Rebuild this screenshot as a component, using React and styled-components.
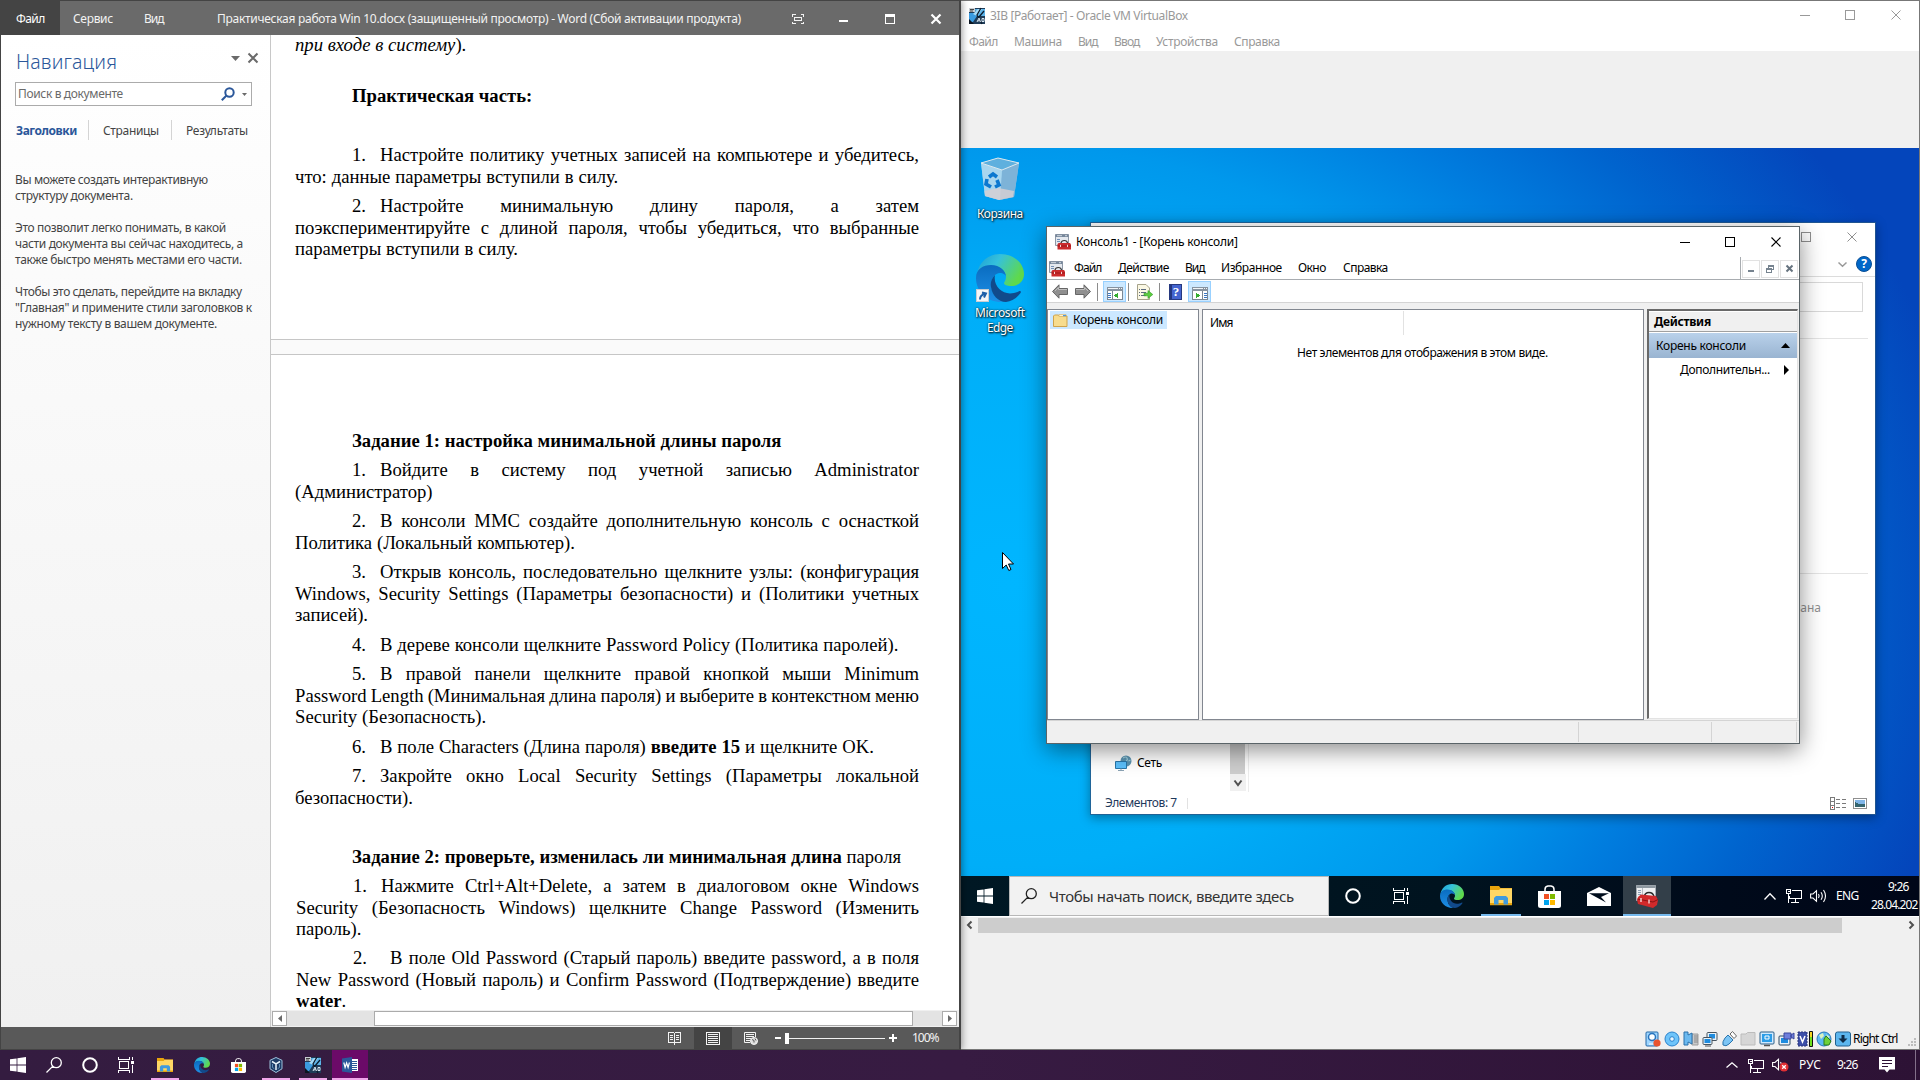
import React, { useLayoutEffect, useRef, useState } from 'react';
import styled, { createGlobalStyle, css } from 'styled-components';

const Global = createGlobalStyle`
  * { box-sizing: border-box; }
  html, body { margin: 0; padding: 0; }
  body {
    width: 1920px; height: 1080px; overflow: hidden; background: #32193f;
    font: 12px/16px "Noto Sans", "Open Sans", sans-serif; color: #000;
  }
  svg { display: block; flex: none; overflow: visible; }
`;

/* ---------- text whose tracking adapts to the width reserved for it ---------- */
const Label = styled.span`
  display: block;
  flex: none;
  white-space: pre;
  margin-left: ${(p) => p.$ml || 0}px;
  margin-top: ${(p) => p.$mt || 0}px;
  width: ${(p) => p.$w}px;
  font-size: ${(p) => p.$size || 12}px;
  line-height: ${(p) => p.$lh || 16}px;
  font-weight: ${(p) => p.$weight || 400};
  color: ${(p) => p.$color || 'inherit'};
`;
function T({ w, children, ml, mt, size, lh, weight, color }) {
  const ref = useRef(null);
  const [spacing, setSpacing] = useState(0);
  useLayoutEffect(() => {
    const range = document.createRange();
    range.selectNodeContents(ref.current);
    const natural = range.getBoundingClientRect().width;
    setSpacing((w - natural) / Math.max(1, String(children).length - 0.5));
  }, [w, children]);
  return (
    <Label ref={ref} $w={w} $ml={ml} $mt={mt} $size={size} $lh={lh} $weight={weight} $color={color}
      style={{ letterSpacing: spacing }}>{children}</Label>
  );
}

const Slot = styled.div`
  flex: none;
  margin-left: ${(p) => p.$ml || 0}px;
  margin-top: ${(p) => p.$mt || 0}px;
`;
const Spring = styled.div`flex: 1;`;

/* ---------- icons ---------- */
const Glyph = ({ w, h, color = 'currentColor', sw = 1, d, fill = 'none', crisp }) => (
  <svg width={w} height={h} viewBox={`0 0 ${w} ${h}`} fill={fill} stroke={sw ? color : 'none'} strokeWidth={sw}
    shapeRendering={crisp ? 'crispEdges' : 'auto'}><path d={d} /></svg>
);
const CloseX = ({ s = 11, color, sw = 1 }) => (
  <Glyph w={s} h={s} color={color} sw={sw} d={`M.5 .5L${s - 0.5} ${s - 0.5}M${s - 0.5} .5L.5 ${s - 0.5}`} />
);
const MaxBox = ({ color }) => <Glyph w={10} h={10} color={color} crisp d="M.5 .5h9v9h-9z" />;
const MinBar = ({ color }) => <Glyph w={10} h={1} color={color} crisp d="M0 .5h10" />;

const WinLogo = ({ s = 16 }) => (
  <svg width={s} height={s} viewBox="0 0 16 16" fill="#fff">
    <path d="M0 2.3L6.6 1.4V7.5H0zM7.4 1.3L16 0v7.5H7.4zM0 8.5h6.6v6.1L0 13.7zM7.4 8.5H16V16L7.4 14.7z" />
  </svg>
);
const Loupe = ({ color = '#fff' }) => (
  <Glyph w={16} h={16} color={color} sw={1.3} d="M15.3 5.7a5 5 0 1 1-10 0a5 5 0 1 1 10 0M6.6 9.4L.5 15.5" />
);
const Ring = () => (
  <svg width="16" height="16" viewBox="0 0 16 16"><circle cx="8" cy="8" r="6.8" fill="none" stroke="#fff" strokeWidth="2" /></svg>
);
const TaskView = () => (
  <svg width="16" height="16" viewBox="0 0 16 16" shapeRendering="crispEdges" fill="none" stroke="#fff">
    <path d="M1.5 4.5h9v7h-9zM.5 0v2.5h11V0M.5 16v-2.500h11V16M14.500 0v3M14.500 8v8" />
    <path d="M13 4h3v3h-3z" fill="#fff" stroke="none" />
  </svg>
);
const Edge = ({ s, id }) => (
  <svg width={s} height={s} viewBox="0 0 48 48">
    <defs>
      <linearGradient id={`${id}a`} x1="0" y1="0" x2="1" y2=".45">
        <stop offset="0" stopColor="#1b9ed4" /><stop offset=".45" stopColor="#35c1dc" /><stop offset="1" stopColor="#5fd94c" />
      </linearGradient>
      <linearGradient id={`${id}b`} x1="0" y1="0" x2="0" y2="1">
        <stop offset="0" stopColor="#0a6cc0" /><stop offset="1" stopColor="#1e8fe6" />
      </linearGradient>
    </defs>
    <path d="M1 20C3 8 12 0 24 0c14 0 24 9.500 24 20c0 8-6 12-13 12c-4 0-7-1-7-3c0-1 2-2.500 2-6c0-6-6-11-14-11C8 12 3 16 1 20z" fill={`url(#${id}a)`} />
    <path d="M0 24c0-9 7-13 15-13c9 0 15 6 15 12c0-2-3-4-6-4c-5 0-9 5-9 12c0 9 6 15 12 17C12 49 0 38 0 24z" fill={`url(#${id}b)`} />
    <path d="M19 21c-3 3-5 7-4 12c1 8 7 15 15 15c6-1 11-4 14.500-9c1-1.500 0-2.500-1.500-1.700C40 39 37 39.500 34 39.500C25 39.500 17 31 19 21z" fill="#114a8b" />
  </svg>
);
const Explorer = ({ s }) => (
  <svg width={s} height={s * 0.87} viewBox="0 0 22 19" preserveAspectRatio="none">
    <path d="M0 0h9l1.500 2H22v17H0z" fill="#e8a40c" /><path d="M0 4h9l1.500-1.500H22V17H0z" fill="#ffd765" />
    <path d="M4 18.500V12l2-2h10l2 2v6.500h-4.500V14h-5v4.500z" fill="#3f9ade" />
  </svg>
);
const Store = ({ s }) => (
  <svg width={s} height={s} viewBox="0 0 23 23">
    <path d="M7 8V4.500a3.500 3.500 0 0 1 3-3.500h3a3.500 3.500 0 0 1 3 3.500V8" fill="none" stroke="#fff" strokeWidth="1.500" />
    <path d="M0 6h23v14.500a2.500 2.500 0 0 1-2.500 2.500h-18A2.500 2.500 0 0 1 0 20.500z" fill="#fff" />
    <path d="M6 9h5v5H6z" fill="#f25022" /><path d="M12 9h5v5h-5z" fill="#7fba00" />
    <path d="M6 15h5v5H6z" fill="#00a4ef" /><path d="M12 15h5v5h-5z" fill="#ffb900" />
  </svg>
);
const Mail = () => (
  <svg width="24" height="19" viewBox="0 0 24 19">
    <path d="M0 6L12 0L24 6V19H0z" fill="#fff" /><path d="M2 6.300h20l-8 3.700l5 5.500L2 6.300z" fill="#000d1c" />
  </svg>
);
const VBox = () => (
  <svg width="14" height="16" viewBox="0 0 14 16">
    <path d="M7 .5l6 2.800v8.500L7 15.500l-6-3.700V3.300z" fill="#1c3b66" stroke="#9fc2dd" />
    <path d="M3 4.500L7 6.800l4-2.300M7 6.800V13" stroke="#e8f4fb" strokeWidth="1.500" fill="none" />
    <path d="M3.500 7v3.500l1.800 1.200M10.500 7v3.500l-1.800 1.200" stroke="#5f8fb8" fill="none" />
  </svg>
);
const VmIcon = () => (
  <svg width="16" height="16" viewBox="0 0 16 16">
    <path d="M0 0h16v16H0z" fill="#1f3c58" /><path d="M6 1h10v7H7z" fill="#5db4ea" /><path d="M0 5h7l1 3-4 6H0z" fill="#3b9be0" />
    <path d="M9 1h4L8 8 4 6z" fill="#a5dbf8" /><path d="M0 0h6v4H0z" fill="#c9cdd2" /><path d="M1 1.500h4M1 3h3" stroke="#444" />
    <path d="M12 0L8 7l5 9M15 3l-5 6" stroke="#0c1c2d" strokeWidth="1.300" fill="none" />
    <path d="M8 14l2-4 1.500 4M8.800 12.800h2M13 10.500h2v3h-2z" stroke="#dbe8f2" fill="none" /><path d="M0 11l5 5H0z" fill="#0b1420" />
  </svg>
);
const WordIcon = () => (
  <svg width="16" height="16" viewBox="0 0 16 16">
    <path d="M8 2h8v12H8z" fill="#fff" /><path d="M10 4.500h5M10 6.500h5M10 8.500h5M10 10.500h5M10 12.500h5" stroke="#2b579a" />
    <path d="M0 1.500L10 0v16L0 14.500z" fill="#2b579a" /><path d="M1.800 5.500l1.300 5 1.500-4.500 1.500 4.500 1.300-5" stroke="#fff" strokeWidth="1.200" fill="none" />
  </svg>
);
const Chevron = ({ w = 12, h = 7, color = '#fff', sw = 1.3, down }) => (
  <Glyph w={w} h={h} color={color} sw={sw} d={down ? `M.5 .5L${w / 2} ${h - 0.8}L${w - 0.5} .5` : `M.5 ${h - 0.5}L${w / 2} .8L${w - 0.5} ${h - 0.5}`} />
);
const Net = () => (
  <svg width="16" height="14" viewBox="0 0 16 14" fill="none" stroke="#fff" shapeRendering="crispEdges">
    <path d="M5.500 1.500h10v8h-12v-3M9.500 9.500v3.500M5 13.500h8M.5 .5h4v4h-4zM2.500 4.500v9M1.500 2.500h2" />
  </svg>
);
const Speaker = () => (
  <Glyph w={17} h={14} color="#fff" sw={1.1} d="M.6 5h2.400L6.500 1.700v10.600L3 9H.6zM8.500 5q1.300 2 0 4M11 3.200q2.600 3.800 0 7.600M13.500 1q4 6 0 12" />
);
const Muted = () => (
  <svg width="17" height="14" viewBox="0 0 17 14">
    <path d="M.6 4.500h2.400L6.500 1.200v10.600L3 8.500H.6zM8.500 4q.8 1 .6 2" fill="none" stroke="#fff" strokeWidth="1.100" />
    <circle cx="12" cy="9" r="4.500" fill="#e02f33" /><path d="M10.200 7.200l3.600 3.600M13.800 7.200l-3.600 3.600" stroke="#fff" strokeWidth="1.300" />
  </svg>
);
const Notice = () => (
  <svg width="16" height="16" viewBox="0 0 16 16">
    <path d="M0 0h16v12.500H10.500L8 15.500 5.500 12.500H0z" fill="#fff" /><path d="M3 3.500h10M3 6.500h10M3 9.500h6" stroke="#2d1235" />
  </svg>
);
const Toolbox = ({ s = 16 }) => (
  <svg width={s} height={s} viewBox="0 0 16 16">
    <path d="M.5 .5h13v11H.5z" fill="#e4e8ee" stroke="#8d97a5" /><path d="M.5 .5h13v2.500H.5z" fill="#76879b" />
    <path d="M2 5.500h3M2 7.500h3" stroke="#7390b5" /><path d="M2 1.700h5M10 1.700h2" stroke="#e8edf2" strokeWidth=".8" />
    <path d="M6 9Q6.500 6.500 9.300 6.500T12.500 9" fill="none" stroke="#333" strokeWidth="1.200" />
    <path d="M3.500 9H15l1 1.500v5H2.500v-5z" fill="#cb2a2c" /><path d="M2.500 12H16" stroke="#8f1517" strokeWidth=".8" />
    <path d="M5.500 10.800v2.200M12.500 10.800v2.200" stroke="#f5d5d5" />
  </svg>
);
const ToolboxLarge = () => (
  <svg width="22" height="23" viewBox="0 0 22 23">
    <path d="M.5 .5h19v15H.5z" fill="#eef0f2" stroke="#a9afb5" /><path d="M.5 .5h19v2.500H.5z" fill="#8d979f" />
    <path d="M2 5.500h3M2 7.500h3M2 9.500h3" stroke="#8fa0b5" /><path d="M6.500 3v8" stroke="#b6bcc2" />
    <path d="M8 12q1-4.500 5-4.500t5 4" fill="none" stroke="#2a2a2a" strokeWidth="1.300" />
    <path d="M2 12l3-2.500L20 11l2 4-1 5-4 3-15-4-1-4z" fill="#d22a2b" /><path d="M1.500 14L17 17l5-2.500" fill="none" stroke="#8c1214" />
    <path d="M5 13v4M13 14.500v4" stroke="#f4cccc" strokeWidth="1.500" />
  </svg>
);
const ArrowIcon = ({ back }) => (
  <svg width="16" height="15" viewBox="0 0 16 15">
    <path d={back ? 'M.5 7.500L7 .8v3.700h8.500v6H7v3.700z' : 'M15.500 7.500L9 .8v3.700H.5v6H9v3.700z'} fill="#8f8f8f" stroke="#666" />
    <path d={back ? 'M3 7L6.500 3.500v2H15' : 'M13 7L9.500 3.500v2H1'} stroke="#bdbdbd" fill="none" />
  </svg>
);
const PaneIcon = ({ flip }) => (
  <svg width="16" height="13" viewBox="0 0 16 13" shapeRendering="crispEdges">
    <path d="M.5 .5h15v12H.5z" fill="#fff" stroke="#7b8794" /><path d="M0 0h16v4H0z" fill="#8793a0" />
    <path d="M1 1.500h10M12 1.500h1M14 1.500h1" stroke="#f2f5f8" />
    {flip ? (
      <><path d="M10.500 4v9" stroke="#7b8794" /><path d="M12 6.500h3M12 8.500h3M12 10.500h3" stroke="#3877c5" /><path d="M4 5.500L8 8.500 4 11.500z" fill="#35ad31" /></>
    ) : (
      <><path d="M5.500 4v9" stroke="#7b8794" /><path d="M1 6.500h3M1 8.500h3M1 10.500h3" stroke="#3877c5" /><path d="M11 5.500L7 8.500l4 3z" fill="#35ad31" /></>
    )}
  </svg>
);
const ExportIcon = () => (
  <svg width="16" height="16" viewBox="0 0 16 16">
    <path d="M.5 .5H9l3.500 3.500v11.500H.5z" fill="#fbf8e4" stroke="#a6a28a" />
    <path d="M2 5.500h1M4 5.500h5M2 8.500h1M4 8.500h5M2 11.500h1M4 11.500h5" stroke="#5c6b80" />
    <path d="M7 9.200h4V6.500l4.800 4-4.800 4v-2.700H7z" fill="#5ccc3e" stroke="#2e9a22" strokeWidth=".6" />
  </svg>
);
const HelpBook = styled.div`
  flex: none; width: 13px; height: 16px; margin-left: ${(p) => p.$ml}px;
  background: linear-gradient(90deg, #24377f 0 2px, #4464cf 2px); border: 1px solid #27397f;
  color: #fff; font: bold 13px/14px "Liberation Serif", serif; text-align: center; padding-left: 1px;
`;
const FolderIcon = () => (
  <svg width="15" height="13" viewBox="0 0 15 13">
    <path d="M.5 2l1-1h4l1 1h7.500v10.500H.5z" fill="#f7dc8d" stroke="#cfa34b" /><path d="M6 .5h7v2H6z" fill="#fff4cf" stroke="#d3ad5c" strokeWidth=".6" />
    <path d="M10 1h3v1.200h-3z" fill="#4f9be0" />
  </svg>
);
const NetworkIcon = () => (
  <svg width="17" height="17" viewBox="0 0 17 17">
    <circle cx="11" cy="6" r="5.500" fill="#5b93b0" /><path d="M8 3q3-2 4 0t-1 3M13.500 6l2-1" stroke="#9fcfdd" strokeWidth="1.200" fill="none" />
    <path d="M.5 6.500h11v7H.5z" fill="#5cc0fc" stroke="#2976a8" /><path d="M3 15.500h6M6 13.500v2" stroke="#8ba3b4" />
  </svg>
);
const Bin = () => (
  <svg width="40" height="44" viewBox="0 0 40 44">
    <path d="M1 6L18 1l21 5-5 34-15 3-14-4z" fill="#8fc7e8" opacity=".95" />
    <path d="M22 13l17-7-5 34-15 3z" fill="#7db3d8" /><path d="M1 6l21 7-2 30-15-4z" fill="#a8d6ef" />
    <path d="M4.500 34l14-3 15.500 3-.8 6L19 43 5 39z" fill="#d3cfd4" opacity=".85" />
    <path d="M1 6L18 1l21 5-17 7z" fill="#5fb0de" stroke="#dbe8ee" />
    <path d="M9 20l4-3 4 3M17 23l2 5-4 2M11 30l-5-3 1-5" fill="none" stroke="#0b78d0" strokeWidth="3.600" />
  </svg>
);
const Shortcut = styled.div`
  position: absolute; left: 0; bottom: 0; width: 13px; height: 13px; background: #f4f6f8; border: 1px solid #c8cdd2;
`;
const HelpDot = styled.div`
  width: 16px; height: 16px; border-radius: 50%; background: #0067c8; border: 1px solid #0a4f96; color: #fff;
  font: bold 12px/14px "Noto Sans", sans-serif; text-align: center; flex: none;
  margin-left: ${(p) => p.$ml}px;
`;

/* ---------- Word ---------- */
const WordWindow = styled.section`
  position: absolute; left: 0; top: 0; width: 961px; height: 1050px; z-index: 2;
  display: flex; flex-direction: column; background: #f0f0f0;
  border: solid #444; border-width: 1px 2px 1px 1px; box-shadow: 1px 0 7px rgba(0, 0, 0, .4);
`;
const WordTitle = styled.header`
  height: 34px; flex: none; display: flex; align-items: center; background: #6a6a6a; color: #f3f3f3;
`;
const FileTab = styled.div`
  width: 59px; height: 34px; background: #444; padding: 10px 0 0 15px; color: #fff;
`;
const WordBody = styled.div`flex: 1; min-height: 0; display: flex;`;
const NavPane = styled.aside`
  width: 270px; flex: none; padding: 11px 0 0 14px; color: #444;
  background: linear-gradient(#fff, #fafafa 30%, #f0f0f0); border-right: 1px solid #c8c8c8;
`;
const NavHead = styled.div`display: flex; align-items: flex-start; height: 36px;`;
const SearchBox = styled.div`
  width: 237px; height: 24px; border: 1px solid #ababab; background: #fff; display: flex; align-items: center; padding-left: 2px; color: #6a6a6a;
`;
const NavTabs = styled.div`display: flex; height: 20px; margin-top: 14px; padding-left: 1px; align-items: center;`;
const TabRule = styled.i`width: 1px; height: 20px; background: #d4d4d4; margin-left: ${(p) => p.$ml}px;`;
const Hint = styled.div`display: flex; flex-direction: column; gap: 16px; margin-top: 32px;`;
const DocColumn = styled.div`flex: 1; min-width: 0; display: flex; flex-direction: column; background: #f0f0f0;`;
const DocView = styled.div`
  height: 975px; overflow: hidden; background: #fff; color: #000;
  font: 18.67px/21.5px "Liberation Serif", "Times New Roman", serif;
`;
const Page = styled.div`
  display: flow-root; padding: ${(p) => p.$top}px 40px 0 24px; height: ${(p) => p.$h}px;
`;
const PageGap = styled.div`height: 16px; background: #fafafa; border: solid #c6c6c6; border-width: 1px 0;`;
const Para = styled.div`margin-top: ${(p) => p.$mt ?? 8}px; margin-left: ${(p) => p.$ml || 0}px;`;
const Line = styled.div`
  height: 21.5px; white-space: nowrap;
  ${(p) => p.$first && css`padding-left: 57px; display: flex;`}
`;
const Num = styled.span`flex: none; width: ${(p) => p.$w || 28}px;`;
const Run = styled.span`
  display: block; flex: 1;
  ${(p) => p.$just ? css`text-align-last: justify; word-spacing: -.7px;` : css`word-spacing: .25px;`}
`;
const Heading = styled.div`margin: ${(p) => p.$mt}px 0 0 57px; height: 21.5px; white-space: nowrap; font-weight: bold; word-spacing: .1px;`;
const Light = styled.span`font-weight: normal;`;

const DocScroll = styled.div`height: 17px; display: flex; align-items: center; padding: 0 2px 0 1px; background: #f0f0f0;`;
const ScrollBtn = styled.div`
  width: 15px; height: 15px; background: #fff; border: 1px solid #ababab; display: flex; align-items: center; justify-content: center;
`;
const Track = styled.div`flex: 1; height: 15px; background: #e3e3e3; padding-left: 87px;`;
const Thumb = styled.div`width: 539px; height: 15px; background: #fff; border: 1px solid #ababab;`;
const WordStatus = styled.footer`
  height: 22px; flex: none; background: #595959; display: flex; align-items: center; color: #f3f3f3;
`;
const ModeBtn = styled.div`
  width: 38px; height: 22px; display: flex; align-items: center; justify-content: center; background: ${(p) => (p.$on ? '#444' : 'none')};
`;
const Zoom = styled.div`display: flex; align-items: center; margin-left: 5px;`;
const ZoomBar = styled.div`width: 100px; height: 11px; display: flex; align-items: center; margin: 0 4px;`;
const Knob = styled.i`width: 4px; height: 11px; background: #fff;`;
const Rail = styled.i`flex: 1; height: 1px; background: #f0f0f0;`;

function ListItem({ n, lines, mt, ml, nw }) {
  return (
    <Para $mt={mt} $ml={ml}>
      {lines.map((l, i) => {
        const just = i < lines.length - 1;
        return (
          <Line key={i} $first={i === 0}>
            {i === 0 && <Num $w={nw}>{n}.</Num>}
            <Run $just={just}>{l}</Run>
          </Line>
        );
      })}
    </Para>
  );
}

const hints = [
  [['Вы можете создать интерактивную', 193], ['структуру документа.', 118]],
  [['Это позволит легко понимать, в какой', 211], ['части документа вы сейчас находитесь, а', 228], ['также быстро менять местами его части.', 227]],
  [['Чтобы это сделать, перейдите на вкладку', 227], ['"Главная" и примените стили заголовков к', 237], ['нужному тексту в вашем документе.', 202]],
];

function Word() {
  return (
    <WordWindow>
      <WordTitle>
        <FileTab><T w={29} lh={16}>Файл</T></FileTab>
        <T w={40} ml={13} mt={2}>Сервис</T>
        <T w={20} ml={31} mt={2}>Вид</T>
        <T w={524} ml={53} mt={2}>Практическая работа Win 10.docx (защищенный просмотр) - Word (Сбой активации продукта)</T>
        <Slot $ml={51} $mt={2}>
          <svg width="12" height="10" viewBox="0 0 12 10" fill="none" stroke="#f3f3f3" shapeRendering="crispEdges">
            <path d="M.5 2.500v-2h3M8.500 .5h3v2M11.500 7.500v2h-3M3.500 9.500h-3v-2M2.500 3.500h7v3h-7z" />
          </svg>
        </Slot>
        <Slot $ml={35} $mt={6}><Glyph w={9} h={2} color="#fff" sw={2} d="M0 1h9" crisp /></Slot>
        <Slot $ml={37} $mt={2}><svg width="10" height="10" shapeRendering="crispEdges"><path d="M.5 .5h9v9h-9z" fill="none" stroke="#fff" /><path d="M0 0h10v3H0z" fill="#fff" /></svg></Slot>
        <Slot $ml={36} $mt={2}><CloseX s={10} color="#fff" sw={2.2} /></Slot>
      </WordTitle>
      <WordBody>
        <NavPane>
          <NavHead>
            <T w={101} ml={1} size={19.500} lh={32} weight={300} color="#2b579a">Навигация</T>
            <Slot $ml={114} $mt={10}><svg width="9" height="5"><path d="M0 0h9L4.500 5z" fill="#6a6a6a" /></svg></Slot>
            <Slot $ml={8} $mt={7}><CloseX s={10} color="#6a6a6a" sw={2} /></Slot>
          </NavHead>
          <SearchBox>
            <T w={105} lh={20}>Поиск в документе</T>
            <Slot $ml={98}><svg width="14" height="14" viewBox="0 0 14 14" fill="none" stroke="#2b579a" strokeWidth="2"><circle cx="8.500" cy="5.500" r="4.200" /><path d="M5.500 8.500L.8 13.200" /></svg></Slot>
            <Slot $ml={7}><svg width="5" height="3"><path d="M0 0h5L2.500 3z" fill="#6a6a6a" /></svg></Slot>
          </SearchBox>
          <NavTabs>
            <T w={61} weight={700} color="#2b579a" mt={2}>Заголовки</T><TabRule $ml={11} />
            <T w={56} ml={14} mt={2}>Страницы</T><TabRule $ml={12} />
            <T w={62} ml={14} mt={2}>Результаты</T>
          </NavTabs>
          <Hint>
            {hints.map((b, i) => <div key={i}>{b.map(([t, w]) => <T key={t} w={w}>{t}</T>)}</div>)}
          </Hint>
        </NavPane>
        <DocColumn>
          <DocView>
            <Page $top={0} $h={304}>
              <Para $mt={-1}><Line><em>при входе в систему</em>).</Line></Para>
              <Heading $mt={29}>Практическая часть:</Heading>
              <ListItem mt={38} n={1} lines={['Настройте политику учетных записей на компьютере и убедитесь,', 'что: данные параметры вступили в силу.']} />
              <ListItem n={2} lines={['Настройте минимальную длину пароля, а затем', 'поэкспериментируйте с длиной пароля, чтобы убедиться, что выбранные', 'параметры вступили в силу.']} />
            </Page>
            <PageGap />
            <Page $top={75} $h={700}>
              <Heading $mt={0}>Задание 1: настройка минимальной длины пароля</Heading>
              <ListItem mt={7.5} n={1} lines={['Войдите в систему под учетной записью Administrator', '(Администратор)']} />
              <ListItem n={2} lines={['В консоли MMC создайте дополнительную консоль с оснасткой', 'Политика (Локальный компьютер).']} />
              <ListItem n={3} lines={['Открыв консоль, последовательно щелкните узлы: (конфигурация', 'Windows, Security Settings (Параметры безопасности) и (Политики учетных', 'записей).']} />
              <ListItem n={4} lines={['В дереве консоли щелкните Password Policy (Политика паролей).']} />
              <ListItem n={5} lines={['В правой панели щелкните правой кнопкой мыши Minimum', 'Password Length (Минимальная длина пароля) и выберите в контекстном меню', 'Security (Безопасность).']} />
              <ListItem n={6} lines={[<>В поле Characters (Длина пароля) <b>введите 15</b> и щелкните OK.</>]} />
              <ListItem n={7} lines={['Закройте окно Local Security Settings (Параметры локальной', 'безопасности).']} />
              <Heading $mt={38}>Задание 2: проверьте, изменилась ли минимальная длина <Light>пароля</Light></Heading>
              <ListItem ml={1} mt={7.5} n={1} lines={['Нажмите Ctrl+Alt+Delete, а затем в диалоговом окне Windows', 'Security (Безопасность Windows) щелкните Change Password (Изменить', 'пароль).']} />
              <ListItem ml={1} mt={7.5} nw={37} n={2} lines={['В поле Old Password (Старый пароль) введите password, а в поля', 'New Password (Новый пароль) и Confirm Password (Подтверждение) введите', <><b>water</b>.</>]} />
            </Page>
          </DocView>
          <DocScroll>
            <ScrollBtn><svg width="4" height="7"><path d="M4 0v7L0 3.500z" fill="#6a6a6a" /></svg></ScrollBtn>
            <Track><Thumb /></Track>
            <ScrollBtn><svg width="4" height="7"><path d="M0 0v7L4 3.500z" fill="#6a6a6a" /></svg></ScrollBtn>
          </DocScroll>
        </DocColumn>
      </WordBody>
      <WordStatus>
        <Slot $ml={655} />
        <ModeBtn>
          <svg width="14" height="13" viewBox="0 0 14 13" fill="none" stroke="#f3f3f3" shapeRendering="crispEdges">
            <path d="M.5 .5h5l1 1 1-1h5v10h-5l-1 1-1-1h-5zM6.500 1v12M2 3.500h3M2 5.500h3M2 7.500h3M8 3.500h3M8 5.500h3M8 7.500h3" />
          </svg>
        </ModeBtn>
        <ModeBtn $on>
          <svg width="14" height="13" viewBox="0 0 14 13" fill="none" stroke="#f3f3f3" shapeRendering="crispEdges">
            <path d="M.5 .5h13v12H.5zM2 2.500h10M2 4.500h10M2 6.500h10M2 8.500h10M2 10.500h10" />
          </svg>
        </ModeBtn>
        <ModeBtn>
          <svg width="14" height="13" viewBox="0 0 14 13" fill="none" stroke="#f3f3f3">
            <path d="M6 10.500H.5V.5h11V5M2 2.500h8M2 4.500h8M2 6.500h5M2 8.500h4" /><circle cx="10" cy="9" r="3.500" fill="#ddd" />
            <path d="M8 7.500l2 1v2M11 6.500l1 2" stroke="#595959" />
          </svg>
        </ModeBtn>
        <Zoom>
          <Slot><Glyph w={6} h={2} sw={2} color="#fff" d="M0 1h6" crisp /></Slot>
          <ZoomBar><Knob /><Rail /></ZoomBar>
          <Slot><Glyph w={8} h={8} sw={2} color="#fff" d="M0 4h8M4 0v8" crisp /></Slot>
        </Zoom>
        <T w={27} ml={15}>100%</T>
      </WordStatus>
    </WordWindow>
  );
}

/* ---------- Virtual machine window ---------- */
const VmWindow = styled.section`
  position: absolute; left: 961px; top: 0; width: 959px; height: 1050px; background: #f0f0f0;
  border: solid #777; border-width: 1px 1px 1px 0; display: flex; flex-direction: column;
`;
const VmTitle = styled.div`height: 25px; background: #fff; display: flex; align-items: center; color: #999; padding: 4px 0 0 8px;`;
const VmMenu = styled.div`height: 25px; background: #fff; display: flex; align-items: center; color: #999; padding: 6px 0 0 8px;`;
const Guest = styled.div`
  position: relative; margin-top: 97px; width: 958px; height: 768px; overflow: hidden; flex: none;
  background: radial-gradient(ellipse 1000px 800px at 5% 57%, #00b6ff 0, #00aef8 35%, #0098ec 55%, #007cde 68%, #0064ce 80%, #0445bb 97%);
`;
const DesktopIcon = styled.div`
  position: absolute; left: 0; top: ${(p) => p.$top}px; width: 78px; display: flex; flex-direction: column; align-items: center;
  color: #fff; text-shadow: 1px 1px 2px #000, 0 0 2px rgba(0,0,0,.8); line-height: 15px;
`;
const EdgeHolder = styled.div`position: relative; width: 48px; height: 48px; margin-bottom: 3px;`;
const Cursor = styled.div`position: absolute; left: 41px; top: 404px; z-index: 5;`;
const VmScroll = styled.div`height: 16px; padding: 1px 5px 0 6px; display: flex; align-items: center; margin-top: 0; border-top: 1px solid #fff;`;
const VmThumb = styled.div`width: 864px; height: 15px; background: #cdcdcd; margin: 0 0 0 6px; flex: none;`;
const VmStatus = styled.div`display: flex; align-items: center; height: 17px; margin: auto 0 2px 684px;`;
const StatusIcons = styled.div`display: flex; gap: 3px; width: 208px;`;

const ExplorerWindow = styled.div`
  position: absolute; left: 129px; top: 74px; width: 786px; height: 593px; background: #fff; border: 1px solid rgba(40, 90, 140, .8);
  background-clip: padding-box; box-shadow: 0 3px 10px rgba(0, 0, 0, .35); display: flex; flex-direction: column; color: #8f8f8f;
`;
const ExTitle = styled.div`height: 54px; border-bottom: 1px solid #dcdcdc; display: flex; flex-direction: column; flex: none;`;
const ExRow = styled.div`
  display: flex; justify-content: flex-end; align-items: center; flex: none;
  height: ${(p) => p.$h}px; padding: ${(p) => p.$pt || 0}px ${(p) => p.$pr}px 0 0;
`;
const ExAddress = styled.div`height: 30px; margin: 5px 12px 0 300px; border: 1px solid #d9d9d9;`;
const ExRule = styled.div`height: 1px; background: #e4e4e4; margin: ${(p) => p.$mt}px 7px 0 300px;`;
const ExLower = styled.div`display: flex; height: 50px; color: #000; margin-top: auto;`;
const ExTree = styled.div`width: 139px; display: flex; padding: 13px 0 0 24px;`;
const ExScroll = styled.div`width: 19px; border-right: 1px solid #ececec;`;
const ExThumb = styled.div`width: 15px; height: 32px; background: #cdcdcd;`;
const ExDown = styled.div`width: 16px; height: 17px; background: #f0f0f0; display: flex; align-items: center; justify-content: center;`;
const ExStatus = styled.div`height: 22px; display: flex; align-items: center; color: #1e395b; padding: 0 8px 0 14px;`;
const ThinRule = styled.i`width: 1px; height: 11px; background: #e2e2e2; margin-left: ${(p) => p.$ml}px;`;
const Faint = styled.div`margin: 26px 54px 0 auto; font-size: 12px;`;

const Console = styled.div`
  position: absolute; left: 85px; top: 78px; width: 754px; height: 518px; background: #fff; border: 1px solid #5a6468;
  box-shadow: 0 6px 22px rgba(0, 0, 0, .45); display: flex; flex-direction: column;
`;
const CTitle = styled.div`height: 30px; display: flex; align-items: center; padding-left: 8px; flex: none;`;
const CMenu = styled.div`height: 23px; display: flex; align-items: center; padding-left: 2px; border-bottom: 1px solid #a8acb0; flex: none;`;
const MdiGroup = styled.div`display: flex; gap: 1px; height: 23px; padding: 3px 1px 0 1px; border-left: 1px solid #a8acb0;`;
const MdiBtn = styled.div`width: 18px; height: 18px; border: 1px solid #e2e2e2; display: flex; align-items: center; justify-content: center;`;
const CTools = styled.div`height: 23px; display: flex; align-items: center; padding: 1px 0 0 5px; border-bottom: 1px solid #d4d4d4; flex: none;`;
const ToolSep = styled.i`width: 1px; height: 18px; background: #8c8c8c; margin-left: ${(p) => p.$ml}px;`;
const ToolOn = styled.div`
  width: 23px; height: 21px; background: #cce8ff; border: 1px solid #99d1ff; display: flex; align-items: center; justify-content: center;
  padding-top: 3px; margin-left: ${(p) => p.$ml}px;
`;
const CBody = styled.div`flex: 1; background: #f0f0f0; padding: 6px 1px 0 0; display: flex; gap: 3px;`;
const Pane = styled.div`background: #fff; border: 1px solid #828790; height: 411px; width: ${(p) => p.$w}px; flex: none;`;
const TreeItem = styled.div`
  margin: 1px 0 0 2px; width: 117px; height: 18px; background: #cce8ff; display: flex; align-items: center; padding-left: 3px;
`;
const Columns = styled.div`height: 25px; display: flex; align-items: center; padding: 1px 0 0 7px;`;
const ColRule = styled.i`width: 1px; height: 24px; background: #e2e2e2; margin-left: 170px;`;
const Actions = styled.div`
  width: 151px; height: 410px; background: #fff; border: 1px solid #696969; border-width: 2px 1px 1px 2px; border-right-color: #e3e3e3; border-bottom-color: #e3e3e3;
`;
const ActHead = styled.div`height: 21px; background: #f0f0f0; border-bottom: 1px solid #a0a0a0; padding: 1px 0 0 5px; border-top: 1px solid #fff;`;
const ActGroup = styled.div`
  height: 25px; margin-top: 1px; background: linear-gradient(#b9d1ea, #99b4d1); display: flex; align-items: center; padding-left: 7px;
`;
const ActItem = styled.div`height: 24px; display: flex; align-items: center; padding-left: 31px;`;
const CStatus = styled.div`height: 23px; background: #f0f0f0; border-top: 1px solid #d4d4d4; display: flex; align-items: center; flex: none;`;
const CRule = styled.i`width: 1px; height: 20px; background: #d4d4d4; margin-left: ${(p) => p.$ml}px;`;

const GuestBar = styled.div`
  position: absolute; left: 0; top: 728px; width: 958px; height: 40px; display: flex; align-items: center; color: #fff;
  background: linear-gradient(90deg, #001824, #00131f 50%, #000a1a 80%, #000618);
`;
const StartBtn = styled.div`width: 48px; display: flex; justify-content: center; flex: none;`;
const GuestSearch = styled.div`
  width: 320px; height: 40px; background: #f2f2f2; border: 1px solid #b8b8b8; display: flex; align-items: center; padding-left: 11px; color: #333; flex: none;
`;
const GuestApp = styled.div`
  width: 48px; height: 40px; flex: none; display: flex; align-items: center; justify-content: center; margin-left: ${(p) => p.$ml || 0}px;
  background: ${(p) => (p.$on ? '#333f49' : 'transparent')};
`;
const AppSlot = styled.div`
  width: ${(p) => p.$w}px; height: 100%; display: flex; align-items: center; justify-content: center; padding-top: 2px;
  border-bottom: ${(p) => p.$line || 2}px solid ${(p) => p.$c || 'transparent'};
`;
const Clock = styled.div`margin-left: 12px; width: 48px; flex: none;`;

/* status-bar indicators of the machine */
const ind = [
  <g key="hd"><rect x="1" y="1" width="12" height="14" rx="1" fill="#9fd6ff" stroke="#2468a8" /><circle cx="7" cy="6" r="3.500" fill="#fff" stroke="#2874bd" strokeWidth="1.500" /><path d="M4 13h4" stroke="#fff" /><circle cx="12" cy="12" r="3.600" fill="#e8542f" /></g>,
  <g key="cd"><circle cx="8" cy="8" r="7" fill="#6ec4fa" stroke="#2a82cc" /><circle cx="8" cy="8" r="2.300" fill="#e9f6ff" stroke="#2a82cc" /></g>,
  <g key="au"><path d="M9 3h6v11H9z" fill="#c9c9c9" stroke="#9d9d9d" /><path d="M11 5h4M11 7h4M11 9h4M11 11h4" stroke="#888" /><path d="M1 1h4v3l4-2v11l-4-2v3H1z" fill="#6bb9ef" stroke="#2a71aa" /></g>,
  <g key="nt"><rect x="5" y="1.500" width="10" height="8" rx="1" fill="#e7f1f8" stroke="#47545f" /><rect x="7" y="3" width="6" height="4.500" fill="#1e8cdf" /><rect x="1" y="6.500" width="9" height="7" rx="1" fill="#e7f1f8" stroke="#47545f" /><rect x="2.500" y="8" width="6" height="4" fill="#1e8cdf" /><path d="M3 15h6" stroke="#555" /></g>,
  <g key="us"><path d="M2 14q-1-3 2-7l3-3 5 5-4 4q-3 3-6 1z" fill="#7cc5f5" stroke="#2b75ad" /><path d="M9 3l2.500-2.500L15.500 5 13 7.500z" fill="#fff" stroke="#666" /></g>,
  <g key="sf"><path d="M1 3h5l1.500-1.500H15V14H1z" fill="#d6d6d6" stroke="#bcbcbc" /></g>,
  <g key="ds"><rect x="1" y="1" width="14" height="12" rx="1" fill="#cfeaff" stroke="#2f5f86" /><path d="M3 3h10v8H3z" fill="#2b9de8" /><path d="M6 5h4v3H6z" fill="#2b9de8" stroke="#fff" /><path d="M5 14.500h6" stroke="#555" strokeWidth="1.500" /></g>,
  <g key="rc"><rect x="1" y="5" width="11" height="9" rx="1" fill="#e7f1f8" stroke="#2e4a63" /><path d="M3 7h7v5H3z" fill="#1e8cdf" /><path d="M6 2h7v6H6zM13 4l3-2v6l-3-2z" fill="#6f7fdc" stroke="#3b479c" /></g>,
  <g key="vt"><rect x="1" y="1" width="9" height="14" fill="#3c4fa8" stroke="#28357b" strokeDasharray="2 1" /><path d="M3 5l2.500 6L8 5" stroke="#fff" strokeWidth="1.500" fill="none" /><path d="M12.500 .5h3v15h-3z" fill="#6be01d" stroke="#111" /><path d="M13 1h2v5h-2z" fill="#f6d321" /></g>,
  <g key="ms"><circle cx="8" cy="8" r="7" fill="#5ab8f3" stroke="#2a78b8" /><path d="M3 4l4-2 1 3-3 3zM10 3l4 3-2 1z" fill="#d9f2c0" /><path d="M8 14V8l2-3 5 5-2 4z" fill="#6ed138" stroke="#2a7d1d" /></g>,
  <g key="kb"><rect x=".5" y="1" width="15" height="14" rx="2" fill="#5cb6ee" stroke="#23618f" /><path d="M8 4v4" stroke="#0e2c48" strokeWidth="3" /><path d="M3.500 7.500h9L8 12z" fill="#0e2c48" /></g>,
];

function GuestExplorer() {
  return (
    <ExplorerWindow>
      <ExTitle>
        <ExRow $h={27} $pr={18}>
          <MaxBox color="#8f8f8f" /><Slot $ml={36}><CloseX s={10} color="#8f8f8f" /></Slot>
        </ExRow>
        <ExRow $h={26} $pr={3} $pt={2}>
          <Chevron w={9} h={5} down color="#999" sw={1.500} /><HelpDot $ml={9}>?</HelpDot>
        </ExRow>
      </ExTitle>
      <ExAddress />
      <ExRule $mt={26} />
      <ExRule $mt={234} />
      <Faint>экрана</Faint>
      <ExLower>
        <ExTree><NetworkIcon /><T w={25} ml={5}>Сеть</T></ExTree>
        <ExScroll>
          <ExThumb />
          <ExDown><Chevron w={8} h={6} down color="#505050" sw={2} /></ExDown>
        </ExScroll>
      </ExLower>
      <ExStatus>
        <T w={72}>Элементов: 7</T><ThinRule $ml={10} />
        <Spring />
        <svg width="16" height="13" viewBox="0 0 16 13" shapeRendering="crispEdges" fill="none" stroke="#7a7a7a">
          <path d="M.5 .5h4v12h-4zM0 4.500h5M0 8.500h5M6 2.500h4M12 2.500h4M6 6.500h4M12 6.500h4M6 10.500h4M12 10.500h4" /><path d="M2 10.500h1" stroke="#d00" />
        </svg>
        <Slot $ml={7}>
          <svg width="14" height="11" viewBox="0 0 14 11" shapeRendering="crispEdges">
            <path d="M.5 .5h13v10H.5z" fill="#fff" stroke="#8f8f8f" /><path d="M2 2h10v4H2z" fill="#7fb5e8" /><path d="M2 4l4 2h6v3H2z" fill="#35656f" />
          </svg>
        </Slot>
      </ExStatus>
    </ExplorerWindow>
  );
}

function MmcConsole() {
  return (
    <Console>
      <CTitle>
        <Toolbox />
        <T w={162} ml={5}>Консоль1 - [Корень консоли]</T>
        <Slot $ml={442}><MinBar color="#000" /></Slot>
        <Slot $ml={35}><MaxBox color="#000" /></Slot>
        <Slot $ml={36}><CloseX s={10} color="#000" sw={1.1} /></Slot>
      </CTitle>
      <CMenu>
        <Slot $mt={1}><Toolbox /></Slot>
        <T w={28} ml={9}>Файл</T><T w={51} ml={16}>Действие</T><T w={20} ml={16}>Вид</T>
        <T w={61} ml={16}>Избранное</T><T w={28} ml={16}>Окно</T><T w={45} ml={17}>Справка</T>
        <Spring />
        <MdiGroup>
          <MdiBtn><Slot $mt={5}><Glyph w={6} h={2} sw={2} color="#76838f" d="M0 1h6" crisp /></Slot></MdiBtn>
          <MdiBtn><svg width="8" height="8" viewBox="0 0 8 8" fill="none" stroke="#76838f" shapeRendering="crispEdges"><path d="M.5 3.500h5v4h-5zM0 4.500h6M2.500 3V.5h5v4H6M2 1.500h6" /></svg></MdiBtn>
          <MdiBtn><CloseX s={7} color="#66737f" sw={2} /></MdiBtn>
        </MdiGroup>
      </CMenu>
      <CTools>
        <ArrowIcon back /><Slot $ml={7}><ArrowIcon /></Slot>
        <ToolSep $ml={6} />
        <ToolOn $ml={5}><PaneIcon /></ToolOn>
        <ToolSep $ml={2} />
        <Slot $ml={8}><ExportIcon /></Slot>
        <ToolSep $ml={6} />
        <HelpBook $ml={9}>?</HelpBook>
        <ToolOn $ml={6}><PaneIcon flip /></ToolOn>
      </CTools>
      <CBody>
        <Pane $w={152}><TreeItem><FolderIcon /><T w={90} ml={5}>Корень консоли</T></TreeItem></Pane>
        <Pane $w={442}>
          <Columns><T w={23}>Имя</T><ColRule /></Columns>
          <T w={251} ml={94} mt={10}>Нет элементов для отображения в этом виде.</T>
        </Pane>
        <Actions>
          <ActHead><T w={57} weight={700} lh={17}>Действия</T></ActHead>
          <ActGroup><T w={90}>Корень консоли</T><Slot $ml={35}><svg width="9" height="5"><path d="M0 5h9L4.500 0z" /></svg></Slot></ActGroup>
          <ActItem><T w={90}>Дополнительн...</T><Slot $ml={14}><svg width="5" height="10"><path d="M0 0v10l5-5z" /></svg></Slot></ActItem>
        </Actions>
      </CBody>
      <CStatus><CRule $ml={531} /><CRule $ml={132} /><CRule $ml={84} /></CStatus>
    </Console>
  );
}

function GuestTaskbar() {
  return (
    <GuestBar>
      <StartBtn><WinLogo /></StartBtn>
      <GuestSearch><Loupe color="#222" /><T w={245} ml={12} size={15} lh={22}>Чтобы начать поиск, введите здесь</T></GuestSearch>
      <GuestApp><Ring /></GuestApp>
      <GuestApp><TaskView /></GuestApp>
      <GuestApp $ml={3}><Edge s={24} id="g" /></GuestApp>
      <GuestApp $ml={1}><AppSlot $w={40} $c="#76b9ed"><Explorer s={22} /></AppSlot></GuestApp>
      <GuestApp><Store s={23} /></GuestApp>
      <GuestApp $ml={2}><Mail /></GuestApp>
      <GuestApp $on><AppSlot $w={48} $c="#76b9ed"><ToolboxLarge /></AppSlot></GuestApp>
      <Slot $ml={93}><Chevron /></Slot>
      <Slot $ml={10}><Net /></Slot>
      <Slot $ml={8}><Speaker /></Slot>
      <T w={23} ml={9}>ENG</T>
      <Clock><T w={21} ml={17} lh={18}>9:26</T><T w={47} lh={18}>28.04.202</T></Clock>
    </GuestBar>
  );
}

function VirtualMachine() {
  return (
    <VmWindow>
      <VmTitle>
        <VmIcon /><T w={198} ml={5}>3IB [Работает] - Oracle VM VirtualBox</T>
        <Slot $ml={612} $mt={-1}><MinBar color="#999" /></Slot>
        <Slot $ml={35} $mt={-1}><MaxBox color="#999" /></Slot>
        <Slot $ml={36} $mt={-1}><CloseX s={10} color="#999" /></Slot>
      </VmTitle>
      <VmMenu>
        <T w={29}>Файл</T><T w={48} ml={16}>Машина</T><T w={20} ml={16}>Вид</T>
        <T w={26} ml={16}>Ввод</T><T w={62} ml={16}>Устройства</T><T w={46} ml={16}>Справка</T>
      </VmMenu>
      <Guest>
        <DesktopIcon $top={9}><Bin /><T w={46} mt={5} lh={16}>Корзина</T></DesktopIcon>
        <DesktopIcon $top={106}>
          <EdgeHolder>
            <Edge s={48} id="d" />
            <Shortcut><Glyph w={11} h={11} color="#1d5fa8" sw={2} d="M3 9.500Q3 5 8 4M5 2.500l4 1-2 4" /></Shortcut>
          </EdgeHolder>
          <T w={50} lh={15}>Microsoft</T><T w={26} lh={15}>Edge</T>
        </DesktopIcon>
        <GuestExplorer />
        <MmcConsole />
        <GuestTaskbar />
        <Cursor>
          <svg width="12" height="19" viewBox="0 0 12 19"><path d="M.5 .5v16l3.700-3.500 2.600 5.500 2.200-1-2.500-5.500h5z" fill="#fff" stroke="#000" /></svg>
        </Cursor>
      </Guest>
      <VmScroll>
        <Glyph w={5} h={8} color="#505050" sw={2} d="M4.500 .5L1 4l3.500 3.500" />
        <VmThumb />
        <Spring />
        <Glyph w={5} h={8} color="#505050" sw={2} d="M.5 .5L4 4 .5 7.500" />
      </VmScroll>
      <VmStatus>
        <StatusIcons>{ind.map((g, i) => <svg key={i} width="16" height="16" viewBox="0 0 16 16">{g}</svg>)}</StatusIcons>
        <T w={45}>Right Ctrl</T>
        <Slot $ml={10} $mt={7}><svg width="8" height="8" fill="#bdbdbd"><path d="M6 0h2v2H6zM3 3h2v2H3zM6 3h2v2H6zM0 6h2v2H0zM3 6h2v2H3zM6 6h2v2H6z" /></svg></Slot>
      </VmStatus>
    </VmWindow>
  );
}

/* ---------- Host taskbar ---------- */
const HostBar = styled.nav`
  position: absolute; left: 0; top: 1050px; width: 1920px; height: 30px; display: flex; align-items: center; color: #fff;
  background: linear-gradient(90deg, #341c40, #371b42 50%, #2d1235); z-index: 3;
`;
const HostApp = styled.div`
  width: ${(p) => p.$w || 28}px; height: 30px; margin-left: ${(p) => p.$ml || 0}px; display: flex; align-items: center; justify-content: center; flex: none;
  background: ${(p) => (p.$on ? '#6b0a68' : 'transparent')}; padding-top: ${(p) => (p.$open ? 2 : 0)}px;
  border-bottom: ${(p) => (p.$open ? '2px solid #f0a6ea' : 'none')};
`;
const Peek = styled.i`width: 1px; height: 30px; background: #83708a; margin-left: 20px;`;

function HostTaskbar() {
  return (
    <HostBar>
      <HostApp $ml={4}><WinLogo /></HostApp>
      <HostApp $ml={8}><Loupe /></HostApp>
      <HostApp $ml={8}><Ring /></HostApp>
      <HostApp $ml={8}><TaskView /></HostApp>
      <HostApp $ml={11} $open><Explorer s={16} /></HostApp>
      <HostApp $ml={9}><Edge s={16} id="h" /></HostApp>
      <HostApp $ml={8}><Store s={15} /></HostApp>
      <HostApp $ml={10} $open><VBox /></HostApp>
      <HostApp $ml={9} $open><VmIcon /></HostApp>
      <HostApp $ml={5} $w={36} $on $open><WordIcon /></HostApp>
      <Spring />
      <Chevron h={6} /><Slot $ml={10} $mt={2}><Net /></Slot><Slot $ml={8}><Muted /></Slot>
      <T w={22} ml={10}>РУС</T><T w={21} ml={16}>9:26</T>
      <Slot $ml={21}><Notice /></Slot>
      <Peek /><Slot $ml={4} />
    </HostBar>
  );
}

export default function App() {
  return (
    <>
      <Global />
      <VirtualMachine />
      <Word />
      <HostTaskbar />
    </>
  );
}
